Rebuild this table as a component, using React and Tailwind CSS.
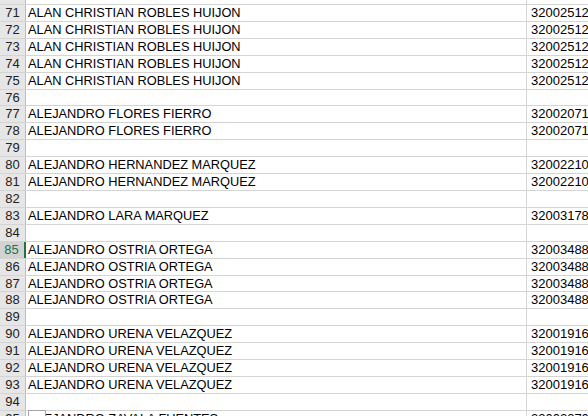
import React from 'react'

const rows = [
  { n: 71, name: 'ALAN CHRISTIAN ROBLES HUIJON', id: '32002512' },
  { n: 72, name: 'ALAN CHRISTIAN ROBLES HUIJON', id: '32002512' },
  { n: 73, name: 'ALAN CHRISTIAN ROBLES HUIJON', id: '32002512' },
  { n: 74, name: 'ALAN CHRISTIAN ROBLES HUIJON', id: '32002512' },
  { n: 75, name: 'ALAN CHRISTIAN ROBLES HUIJON', id: '32002512' },
  { n: 76, name: '', id: '' },
  { n: 77, name: 'ALEJANDRO FLORES FIERRO', id: '32002071' },
  { n: 78, name: 'ALEJANDRO FLORES FIERRO', id: '32002071' },
  { n: 79, name: '', id: '' },
  { n: 80, name: 'ALEJANDRO HERNANDEZ MARQUEZ', id: '32002210' },
  { n: 81, name: 'ALEJANDRO HERNANDEZ MARQUEZ', id: '32002210' },
  { n: 82, name: '', id: '' },
  { n: 83, name: 'ALEJANDRO LARA MARQUEZ', id: '32003178' },
  { n: 84, name: '', id: '' },
  { n: 85, name: 'ALEJANDRO OSTRIA ORTEGA', id: '32003488', active: true },
  { n: 86, name: 'ALEJANDRO OSTRIA ORTEGA', id: '32003488' },
  { n: 87, name: 'ALEJANDRO OSTRIA ORTEGA', id: '32003488' },
  { n: 88, name: 'ALEJANDRO OSTRIA ORTEGA', id: '32003488' },
  { n: 89, name: '', id: '' },
  { n: 90, name: 'ALEJANDRO URENA VELAZQUEZ', id: '32001916' },
  { n: 91, name: 'ALEJANDRO URENA VELAZQUEZ', id: '32001916' },
  { n: 92, name: 'ALEJANDRO URENA VELAZQUEZ', id: '32001916' },
  { n: 93, name: 'ALEJANDRO URENA VELAZQUEZ', id: '32001916' },
  { n: 94, name: '', id: '' },
  { n: 95, name: 'ALEJANDRO ZAVALA FUENTES', id: '32002370' },
]

function Row({ r }) {
  return (
    <div className="flex h-[16.92px] shrink-0 border-b border-[#d4d4d4] leading-[16px]">
      <div
        className={
          r.active
            ? 'w-[26px] shrink-0 text-center bg-[#d2d2d2] text-[#217346] border-r-2 border-[#217346] pr-[1px]'
            : 'w-[26px] shrink-0 text-center bg-[#e6e6e6] text-[#222] border-r border-[#bdbdbd]'
        }
      >
        {r.n}
      </div>
      <div className="w-[501px] shrink-0 pl-[2px] text-[12.8px] border-r border-[#d4d4d4] whitespace-nowrap overflow-hidden">
        {r.name}
      </div>
      <div className="flex-1 pl-[4px] whitespace-nowrap overflow-hidden">{r.id}</div>
    </div>
  )
}

export default function App() {
  return (
    <div className="relative w-[588px] h-[416px] overflow-hidden bg-white text-black text-[13px] font-['Liberation_Sans',Arial,sans-serif] flex flex-col">
      {/* partial row 70 */}
      <div className="flex h-[5px] shrink-0 border-b border-[#d4d4d4]">
        <div className="w-[26px] shrink-0 bg-[#e6e6e6] border-r border-[#bdbdbd]" />
        <div className="w-[501px] shrink-0 border-r border-[#d4d4d4]" />
        <div className="flex-1" />
      </div>
      {rows.map((r) => (
        <Row key={r.n} r={r} />
      ))}
      {/* paste options box over row 95 */}
      <div className="absolute left-[28px] top-[410px] w-[18px] h-[10px] bg-white border border-[#a6a6a6]" />
    </div>
  )
}
